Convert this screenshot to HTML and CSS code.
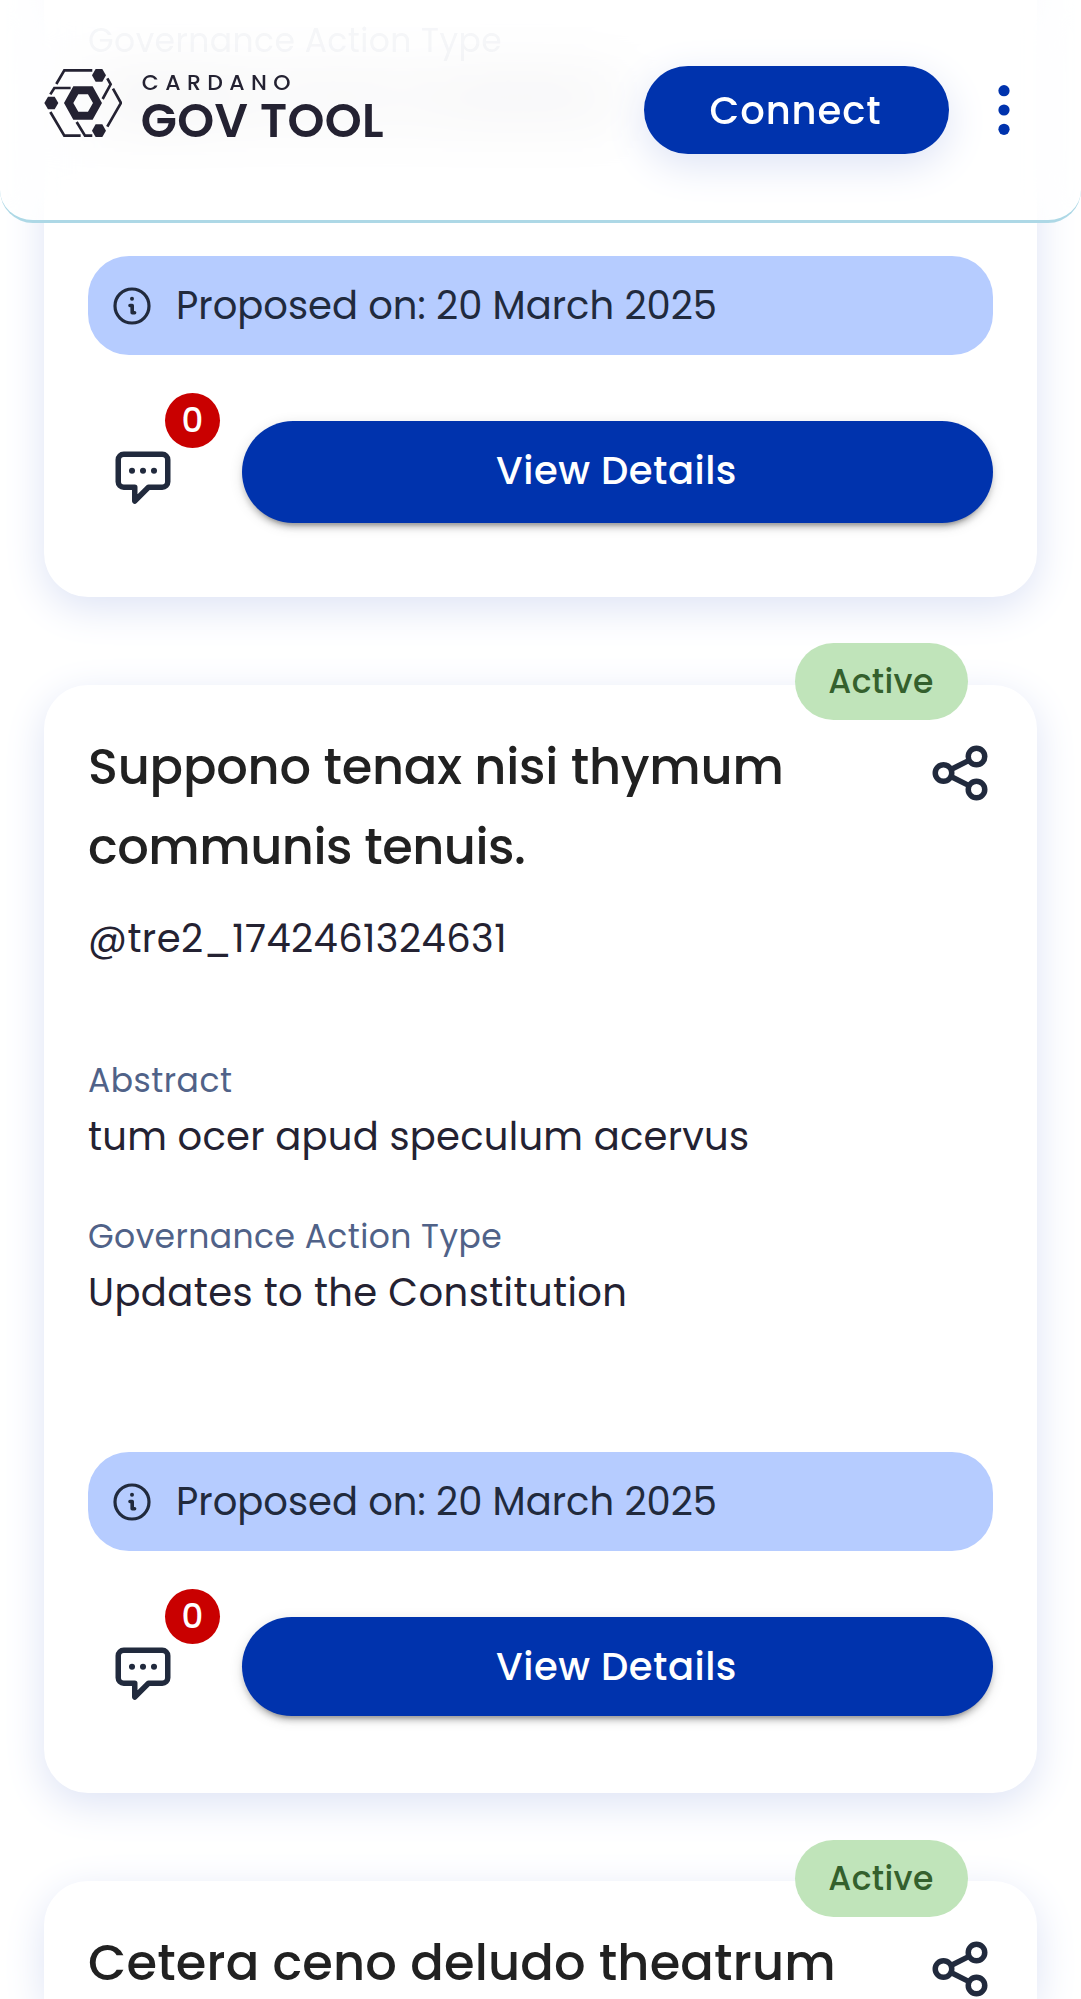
FILE: index.html
```html
<!DOCTYPE html>
<html lang="en">
<head>
<meta charset="utf-8">
<title>Cardano GovTool</title>
<link rel="stylesheet" href="styles.css">
</head>
<body>
<svg class="sprite" aria-hidden="true">
  <symbol id="info" viewBox="0 0 44 44"><circle cx="22" cy="22" r="17" fill="none" stroke="currentColor" stroke-width="3.2"/><circle cx="22" cy="14.8" r="2" fill="currentColor"/><path d="M20 21.5h2.2v7.2h2.4" fill="none" stroke="currentColor" stroke-width="3.6" stroke-linecap="round" stroke-linejoin="round"/></symbol>
  <symbol id="comment" viewBox="0 0 24 24"><path d="M5 3h14a2 2 0 0 1 2 2v8a2 2 0 0 1-2 2h-5l-5 5v-5H5a2 2 0 0 1-2-2V5a2 2 0 0 1 2-2z" fill="none" stroke="currentColor" stroke-width="2" stroke-linejoin="round"/><g fill="currentColor"><circle cx="8" cy="9" r="1.1"/><circle cx="12" cy="9" r="1.1"/><circle cx="16" cy="9" r="1.1"/></g></symbol>
  <symbol id="share" viewBox="0 0 24 24"><g fill="none" stroke="currentColor" stroke-width="2"><circle cx="18" cy="6" r="3"/><circle cx="6" cy="12" r="3"/><circle cx="18" cy="18" r="3"/><path d="M8.7 10.7l6.6-3.3M8.7 13.3l6.6 3.3"/></g></symbol>
</svg>

<header class="header">
  <div class="logo">
    <svg class="logo-mark" viewBox="42 57 235 204">
      <g fill="none" stroke="currentColor" stroke-width="8">
        <path d="M79 102 103 61H187"/><path d="M61 133 73 114H122"/><path d="M232 85 242 103 218 147"/>
        <path d="M249 116 273 159 232 230"/><path d="M61 186 103 257H152"/><path d="M140 216 165 257H187"/>
      </g>
      <g fill="currentColor">
        <path fill-rule="evenodd" d="M102 159 130 109H188L216 159 188 209H130ZM130 159 145 185H174L189 159 174 133H145Z"/>
        <path d="M186 76 197 57H217L228 76 217 95H197Z"/><path d="M43 159 54 140H74L85 159 74 178H54Z"/><path d="M186 242 197 223H217L228 242 217 261H197Z"/>
      </g>
    </svg>
    <div class="logo-text"><span class="logo-top">CARDANO</span><span class="logo-name">GOV TOOL</span></div>
  </div>
  <button class="connect">Connect</button>
  <svg class="menu" viewBox="0 0 12 50"><g fill="currentColor"><circle cx="6" cy="5.7" r="5.6"/><circle cx="6" cy="25" r="5.6"/><circle cx="6" cy="44.3" r="5.6"/></g></svg>
</header>

<main class="list">
  <article class="card card-scrolled">
    <div class="label label-type label-veiled">Governance Action Type</div>
    <div class="value value-type">Updates to the Constitution</div>
    <div class="date"><svg class="date-icon"><use href="#info"/></svg><span>Proposed on: 20 March 2025</span></div>
    <div class="actions">
      <div class="comments"><svg class="icon"><use href="#comment"/></svg><span class="count">0</span></div>
      <button class="details details-tall">View Details</button>
    </div>
  </article>

  <article class="card">
    <div class="chip">Active</div>
    <div class="head">
      <h2 class="title">Suppono tenax nisi thymum<br><span class="title-end">communis tenuis.</span></h2>
      <svg class="icon share"><use href="#share"/></svg>
    </div>
    <div class="author">@tre2_1742461324631</div>
    <div class="label label-abstract">Abstract</div>
    <div class="value">tum ocer apud speculum acervus</div>
    <div class="label label-type">Governance Action Type</div>
    <div class="value value-type">Updates to the Constitution</div>
    <div class="date"><svg class="date-icon"><use href="#info"/></svg><span>Proposed on: 20 March 2025</span></div>
    <div class="actions">
      <div class="comments"><svg class="icon"><use href="#comment"/></svg><span class="count">0</span></div>
      <button class="details">View Details</button>
    </div>
  </article>

  <article class="card card-last">
    <div class="chip">Active</div>
    <div class="head">
      <h2 class="title title-wide">Cetera ceno deludo theatrum</h2>
      <svg class="icon share"><use href="#share"/></svg>
    </div>
  </article>
</main>
</body>
</html>
```
FILE: styles.css
```css
* { box-sizing: border-box; }
body {
  margin: 0;
  height: 1999px;
  overflow: hidden;
  background: #fff;
  color: #242232;
  font-family: Poppins, Inter, "Open Sans", sans-serif;
  font-feature-settings: "cv11";
}
button { border: 0; padding: 0; font: inherit; font-feature-settings: inherit; color: #fff; background: #0033ad; }
.sprite { position: absolute; width: 0; height: 0; }

.header {
  position: fixed;
  inset: 0 0 auto;
  z-index: 2;
  height: 222.5px;
  padding: 0 71px 0 44px;
  display: flex;
  align-items: flex-start;
  border-bottom: 3px solid #add8e6;
  border-radius: 0 0 33px 33px;
  background: rgba(255, 255, 255, .73);
  backdrop-filter: blur(34px);
}
.logo { display: flex; gap: 18.5px; margin: 68px auto 0 0; }
.logo-mark { width: 78.3px; height: 68px; margin-top: 1px; }
.logo-text { display: flex; flex-direction: column; align-items: flex-start; gap: 1px; }
.logo-top { padding-left: 1px; font-size: 22px; line-height: 30px; font-weight: 500; letter-spacing: 6.4px; }
.logo-name { font-size: 47px; line-height: 44px; font-weight: 600; letter-spacing: .4px; }
.connect {
  width: 305px;
  height: 88px;
  margin: 66px 49px 0 0;
  padding-right: 2px;
  border-radius: 44px;
  font-size: 38.5px;
  font-weight: 500;
  letter-spacing: .9px;
  box-shadow: 0 11px 41px #dde3f5;
}
.menu { width: 12px; height: 50px; margin-top: 85px; color: #0033ad; }

.list { padding: 0 44px; display: flex; flex-direction: column; gap: 88px; }
.card {
  position: relative;
  height: 1108.3px;
  flex: none;
  padding: 42px 44px 0;
  border-radius: 44px;
  background: #fff;
  box-shadow: 0 11px 41px #dde3f5;
}
.card-scrolled { height: 696.7px; margin-top: -100px; padding-top: 68.5px; }
.card-last { height: 118px; border-radius: 44px 44px 0 0; }

.chip {
  position: absolute;
  top: -41.4px;
  right: 69px;
  width: 173px;
  height: 77px;
  padding-right: 1px;
  border-radius: 38.5px;
  background: #c0e4ba;
  color: #34602d;
  font-size: 33px;
  font-weight: 500;
  line-height: 78px;
  letter-spacing: .35px;
  text-align: center;
}
.head { display: flex; justify-content: space-between; align-items: flex-start; }
.title { margin: 0; color: #212121; font-size: 49.5px; line-height: 80px; font-weight: 500; letter-spacing: -.23px; white-space: nowrap; }
.title-end { letter-spacing: -.5px; }
.title-wide { letter-spacing: .18px; }
.icon { display: block; width: 66px; height: 66px; color: #212a3d; }
.share { margin-top: 13px; }
.author { margin-top: 23.5px; font-size: 38.5px; line-height: 58px; letter-spacing: .43px; }
.label { font-size: 33px; line-height: 50px; letter-spacing: .5px; color: #506288; }
.label-abstract { margin-top: 88px; }
.label-type { margin-top: 46.5px; letter-spacing: .43px; }
.label-veiled { position: relative; z-index: 3; margin-top: 47.5px; opacity: .05; }
.value { margin-top: 1.5px; font-size: 38.5px; line-height: 58px; letter-spacing: .24px; }
.value-type { letter-spacing: .42px; }

.date {
  height: 99px;
  margin-top: 130px;
  padding: 1px 0 0 22px;
  display: flex;
  align-items: center;
  gap: 22px;
  border-radius: 41px;
  background: #b6ccff;
  color: #212a3d;
  font-size: 38.5px;
  line-height: 58px;
}
.date-icon { width: 44px; height: 44px; }
.actions { margin-top: 66px; display: flex; align-items: flex-start; gap: 44px; }
.comments { position: relative; width: 110px; padding: 25px 22px 0; }
.count {
  position: absolute;
  top: -28px;
  left: 77px;
  width: 55px;
  height: 55px;
  border-radius: 50%;
  background: #c90000;
  color: #fff;
  font-size: 34px;
  font-weight: 500;
  line-height: 55px;
  text-align: center;
}
.details {
  flex: 1;
  height: 99px;
  padding-right: 2px;
  border-radius: 51px;
  font-size: 38.5px;
  font-weight: 500;
  line-height: 99px;
  letter-spacing: .5px;
  box-shadow: 0 8px 3px -5.5px rgba(0,0,0,.2), 0 5.5px 5.5px rgba(0,0,0,.14), 0 3px 14px rgba(0,0,0,.12);
}
.details-tall { height: 102px; padding-bottom: 3px; }
```
